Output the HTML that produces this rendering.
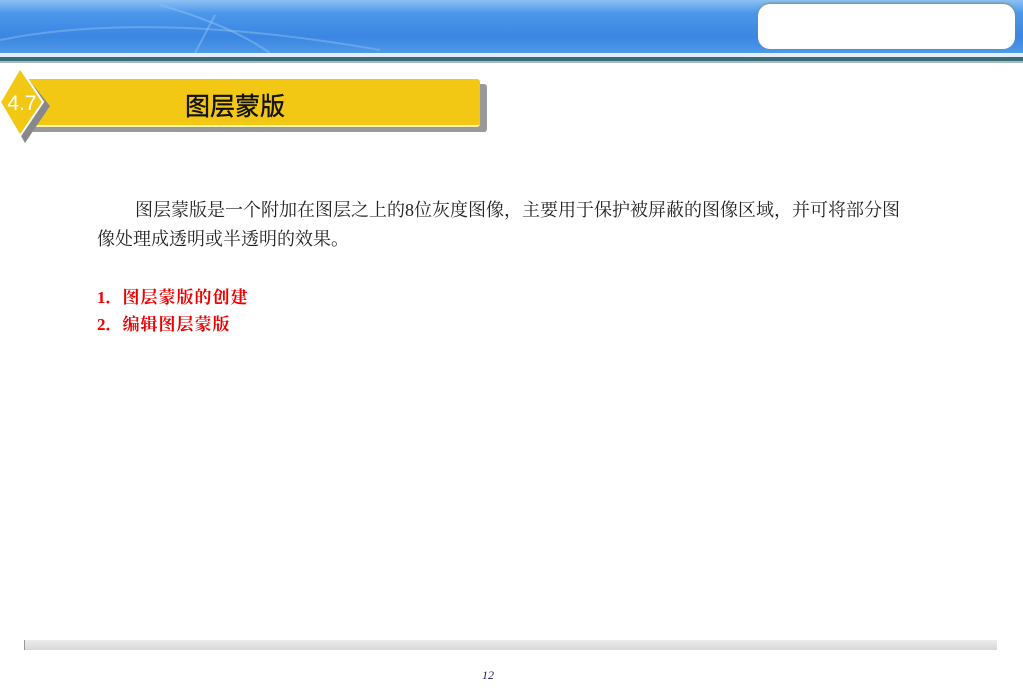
<!DOCTYPE html>
<html><head><meta charset="utf-8"><style>
body{margin:0;width:1023px;height:696px;position:relative;background:#fff;overflow:hidden;font-family:"Liberation Serif","Noto Serif CJK SC",serif}
.hdr{position:absolute;left:0;top:0;width:1023px;height:53px;background:linear-gradient(#8cc0f4 0%,#4b97ea 25%,#3a86e2 70%,#4f99e6 100%)}
.l1{position:absolute;left:0;top:53px;width:1023px;height:4px;background:#e4eef8}
.l2{position:absolute;left:0;top:57px;width:1023px;height:4px;background:#3b6c7c}
.l3{position:absolute;left:0;top:61px;width:1023px;height:2px;background:#a9bcbc}
.box{position:absolute;left:758px;top:4px;width:257px;height:45px;background:#fff;border-radius:12px;box-shadow:0 -1px 2px #7a8a70}
.sh{position:absolute;left:31px;top:84px;width:456px;height:48px;background:#999;border-radius:3px}
.ban{position:absolute;left:25px;top:79px;width:455px;height:46px;background:#f2c814;border-radius:3px;border-bottom:2px solid #fff3b0}
.ban span{position:absolute;left:160px;top:8px;font:25px "Liberation Sans","Noto Sans CJK SC",sans-serif;color:#111;-webkit-text-stroke:.4px #111}
p{position:absolute;margin:0;font-size:18px;color:#222;white-space:nowrap}
.r{color:#e00;font-weight:bold}
</style></head><body>
<div class="hdr"><svg width="1023" height="53" style="position:absolute;left:0;top:0"><path d="M0 40 Q150 10 380 50" stroke="#7fb3ee" stroke-width="2" fill="none" opacity=".6"/><path d="M160 5 Q230 25 270 53" stroke="#8cc0f4" stroke-width="2" fill="none" opacity=".5"/><path d="M215 15 L195 53" stroke="#8cc0f4" stroke-width="2" fill="none" opacity=".5"/></svg></div>
<div class="l1"></div><div class="l2"></div><div class="l3"></div>
<div class="box"></div>
<div class="sh"></div>
<div class="ban"><span>图层蒙版</span></div>
<svg width="80" height="80" style="position:absolute;left:0;top:66px"><polygon points="25,9 50,40 25,77 4,40" fill="#888"/><polygon points="20,2 43,36 20,70 0,36" fill="#f2c814" stroke="#fff" stroke-width="2"/><text x="22" y="44" text-anchor="middle" font-family="Liberation Sans" font-size="21" fill="#fff">4.7</text></svg>
<p style="left:135px;top:196px">图层蒙版是一个附加在图层之上的8位灰度图像，主要用于保护被屏蔽的图像区域，并可将部分图</p>
<p style="left:97px;top:225px">像处理成透明或半透明的效果。</p>
<p class="r" style="left:97px;top:283px;font-size:17px">1．<span style="letter-spacing:1px">图层蒙版的创建</span></p>
<p class="r" style="left:97px;top:310px;font-size:17px">2．<span style="letter-spacing:1px">编辑图层蒙版</span></p>
<div style="position:absolute;left:24px;top:640px;width:972px;height:10px;background:linear-gradient(#ececec,#d8d8d8);border-left:1px solid #999"></div>
<div style="position:absolute;left:482px;top:668px;font:italic 12px 'Liberation Serif',serif;color:#1a1a6a">12</div>
</body></html>
